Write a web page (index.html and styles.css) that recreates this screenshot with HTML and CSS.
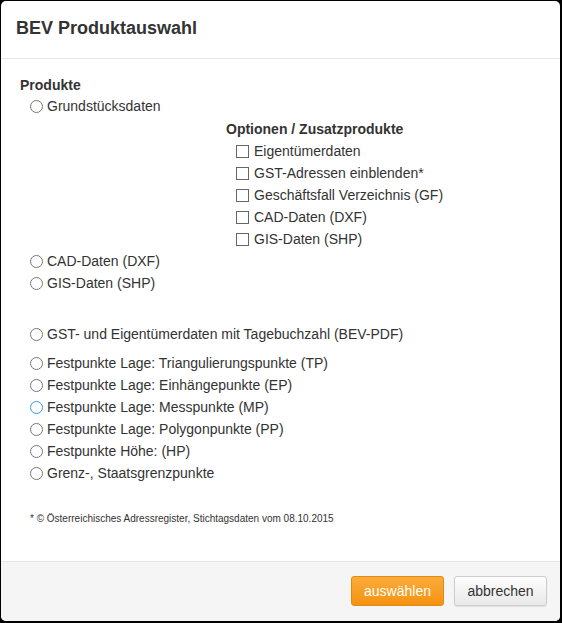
FILE: index.html
```html
<!DOCTYPE html>
<html lang="de">
<head>
<meta charset="utf-8">
<title>BEV Produktauswahl</title>
<link rel="stylesheet" href="styles.css">
</head>
<body>
<div class="dialog">
  <div class="dlg-header"><h1 class="dlg-title">BEV Produktauswahl</h1></div>
  <div class="dlg-body">
    <div class="section-title">Produkte</div>
    <label class="row"><span class="radio"></span>Grundstücksdaten</label>
    <div class="options">
      <div class="options-title">Optionen / Zusatzprodukte</div>
      <label class="row crow"><span class="check"></span>Eigentümerdaten</label>
      <label class="row crow"><span class="check"></span>GST-Adressen einblenden*</label>
      <label class="row crow"><span class="check"></span>Geschäftsfall Verzeichnis (GF)</label>
      <label class="row crow"><span class="check"></span>CAD-Daten (DXF)</label>
      <label class="row crow"><span class="check"></span>GIS-Daten (SHP)</label>
    </div>
    <label class="row"><span class="radio"></span>CAD-Daten (DXF)</label>
    <label class="row"><span class="radio"></span>GIS-Daten (SHP)</label>
    <label class="row gap-big"><span class="radio"></span>GST- und Eigentümerdaten mit Tagebuchzahl (BEV-PDF)</label>
    <label class="row gap-small"><span class="radio"></span>Festpunkte Lage: Triangulierungspunkte (TP)</label>
    <label class="row"><span class="radio"></span>Festpunkte Lage: Einhängepunkte (EP)</label>
    <label class="row"><span class="radio focus"></span>Festpunkte Lage: Messpunkte (MP)</label>
    <label class="row"><span class="radio"></span>Festpunkte Lage: Polygonpunkte (PP)</label>
    <label class="row"><span class="radio"></span>Festpunkte Höhe: (HP)</label>
    <label class="row"><span class="radio"></span>Grenz-, Staatsgrenzpunkte</label>
    <div class="footnote">* © Österreichisches Adressregister, Stichtagsdaten vom 08.10.2015</div>
  </div>
  <div class="dlg-footer">
    <button class="btn btn-primary">auswählen</button>
    <button class="btn btn-default">abbrechen</button>
  </div>
</div>
</body>
</html>
```
FILE: styles.css
```css
html, body {
  margin: 0;
  padding: 0;
  background: #000;
  width: 562px;
  height: 623px;
  overflow: hidden;
}
.dialog {
  margin: 1px 0 0 1px;
  width: 559px;
  height: 620px;
  background: #fff;
  border-radius: 5px;
  display: flex;
  flex-direction: column;
  font-family: "Liberation Sans", Arial, sans-serif;
  font-size: 14px;
  color: #333;
  overflow: hidden;
}
.dlg-header {
  border-bottom: 1px solid #e5e5e5;
  padding: 0 15px;
  display: flex;
  align-items: center;
  box-sizing: border-box;
  height: 58px;
}
.dlg-title {
  margin: 0;
  font-size: 18px;
  font-weight: bold;
  color: #333;
  line-height: 20px;
  padding-bottom: 3px;
}
.dlg-body {
  flex: 1;
  padding: 16px 19px 0 19px;
}
.section-title {
  font-weight: bold;
  line-height: 20px;
}
.row {
  display: flex;
  align-items: center;
  height: 22px;
  padding-left: 10px;
  line-height: 22px;
  white-space: nowrap;
}
.radio {
  width: 11px;
  height: 11px;
  border: 1px solid #777;
  border-radius: 50%;
  margin-right: 4px;
  flex: none;
  background: #fff;
}
.radio.focus {
  border-color: #3399dd;
}
.options {
  padding-left: 206px;
  margin-top: 1px;
}
.options-title {
  font-weight: bold;
  line-height: 22px;
}
.crow {
  padding-left: 10px;
}
.check {
  width: 11px;
  height: 11px;
  border: 1px solid #666;
  margin-right: 5px;
  flex: none;
  background: #fff;
}
.gap-big {
  margin-top: 29px;
}
.gap-small {
  margin-top: 7px;
}
.footnote {
  font-size: 10px;
  padding-left: 10px;
  margin-top: 29px;
  line-height: 12px;
  color: #333;
}
.dlg-footer {
  height: 60px;
  box-sizing: border-box;
  border-top: 1px solid #e5e5e5;
  background: #f5f5f5;
  display: flex;
  justify-content: flex-end;
  align-items: center;
  gap: 10px;
  padding: 0 13px 1px 0;
}
.btn {
  height: 30px;
  padding: 0 12px;
  font-family: "Liberation Sans", Arial, sans-serif;
  font-size: 14px;
  border-radius: 3px;
  cursor: pointer;
}
.btn-primary {
  width: 93px;
  color: #fff;
  background: linear-gradient(#fbac3a, #f59212);
  border: 1px solid #e48a10;
}
.btn-default {
  width: 93px;
  color: #333;
  background: linear-gradient(#fdfdfd, #e9e9e9);
  border: 1px solid #ccc;
  box-shadow: 0 1px 1px rgba(0,0,0,0.08);
}
```
